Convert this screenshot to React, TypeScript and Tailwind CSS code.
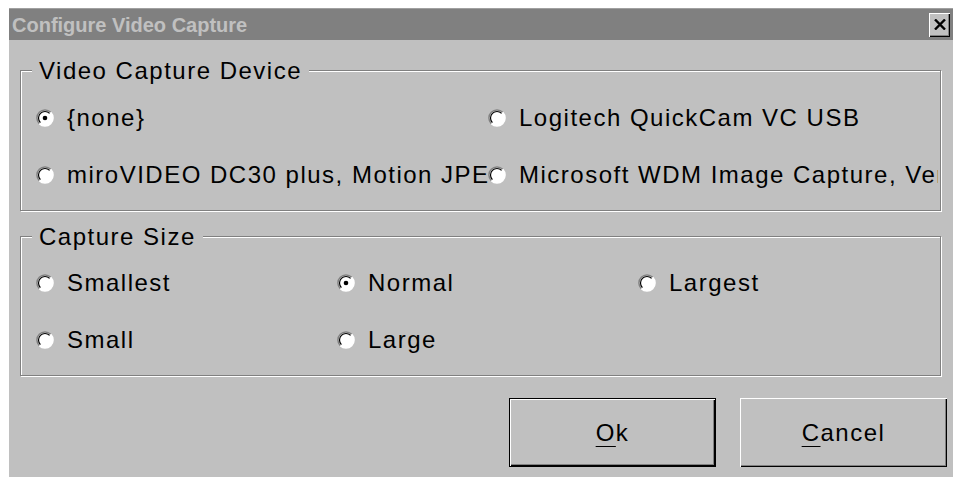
import { ReactNode } from "react";

const deviceRows = [
  ["{none}", "Logitech QuickCam VC USB"],
  [
    "miroVIDEO DC30 plus, Motion JPEG Capture/Compression Driver",
    "Microsoft WDM Image Capture, Version 5.00",
  ],
];

const sizeRows = [
  ["Smallest", "Normal", "Largest"],
  ["Small", "Large", ""],
];

// classic two-tone radio button
const Radio = ({ checked }: { checked?: boolean }) => (
  <svg width="18" height="18" viewBox="0 0 18 18" className="shrink-0">
    <circle cx="9" cy="9" r="8" fill="#fff" />
    <path d="M3.3 14.7 A8 8 0 0 1 14.7 3.3" fill="none" stroke="#808080" strokeWidth="1.5" />
    <path d="M4.4 13.6 A6.5 6.5 0 0 1 13.6 4.4" fill="none" stroke="#000" strokeWidth="1.2" />
    <path d="M14.7 3.3 A8 8 0 0 1 3.3 14.7" fill="none" stroke="#fff" strokeWidth="1.5" />
    {checked && <circle cx="9" cy="9" r="2.3" fill="#000" />}
  </svg>
);

const Option = ({ label, checked }: { label: string; checked?: boolean }) =>
  label ? (
    <div className="flex items-center h-[28px] overflow-hidden whitespace-nowrap">
      <Radio checked={checked} />
      <span className="ml-[13px]">{label}</span>
    </div>
  ) : (
    <div />
  );

const Group = ({
  title,
  height,
  children,
}: {
  title: string;
  height: string;
  children: ReactNode;
}) => (
  <div
    className={`relative w-[921px] ${height} border border-[#808080] shadow-[inset_1px_1px_0_#fff,1px_1px_0_#fff]`}
  >
    <span className="absolute -top-[14px] left-[11px] px-[7px] bg-[#c0c0c0] leading-[28px]">
      {title}
    </span>
    {children}
  </div>
);

export default function App() {
  return (
    <div className="w-[953px] h-[477px] bg-white pt-[8px] pl-[9px] overflow-hidden font-['Liberation_Sans',Arial,sans-serif] text-black">
      <div className="flex flex-col h-full bg-[#c0c0c0]">
        <div className="h-[32px] shrink-0 bg-[#808080] border-t border-[#a0a0a0] flex items-center justify-between pl-[3px] pr-[3px]">
          <span className="text-[20px] font-bold text-[#c0c0c0] leading-none">
            Configure Video Capture
          </span>
          <button className="w-[21px] h-[24px] bg-[#c0c0c0] flex items-center justify-center shadow-[inset_1px_1px_0_#fff,inset_-1px_-1px_0_#000,inset_-2px_-2px_0_#808080]">
            <svg width="12" height="11" viewBox="0 0 12 11">
              <path d="M1 0.5 L11 10.5 M11 0.5 L1 10.5" stroke="#000" strokeWidth="2.4" />
            </svg>
          </button>
        </div>

        <div className="flex flex-col pl-[11px] pt-[30px] text-[24px] tracking-[1.5px]">
          <Group title="Video Capture Device" height="h-[141px]">
            <div className="grid grid-cols-[452px_1fr] gap-y-[29px] pt-[33px] pl-[15px] pr-[2px]">
              {deviceRows.map((row, r) =>
                row.map((label, c) => (
                  <Option key={`${r}-${c}`} label={label} checked={r === 0 && c === 0} />
                ))
              )}
            </div>
          </Group>

          <div className="mt-[25px]">
            <Group title="Capture Size" height="h-[140px]">
              <div className="grid grid-cols-[301px_301px_1fr] gap-y-[29px] pt-[32px] pl-[15px] pr-[2px]">
                {sizeRows.map((row, r) =>
                  row.map((label, c) => (
                    <Option key={`${r}-${c}`} label={label} checked={label === "Normal"} />
                  ))
                )}
              </div>
            </Group>
          </div>
        </div>

        <div className="flex justify-end gap-[24px] pr-[6px] mt-[22px] text-[24px] tracking-[1.5px]">
          <button className="w-[207px] h-[69px] bg-[#c0c0c0] border border-black shadow-[inset_1px_1px_0_#fff,inset_-1px_-1px_0_#000,inset_-2px_-2px_0_#808080]">
            <span className="underline underline-offset-[5px] decoration-1">O</span>k
          </button>
          <button className="w-[207px] h-[69px] bg-[#c0c0c0] shadow-[inset_1px_1px_0_#fff,inset_-1px_-1px_0_#000,inset_-2px_-2px_0_#808080]">
            <span className="underline underline-offset-[5px] decoration-1">C</span>ancel
          </button>
        </div>
      </div>
    </div>
  );
}
